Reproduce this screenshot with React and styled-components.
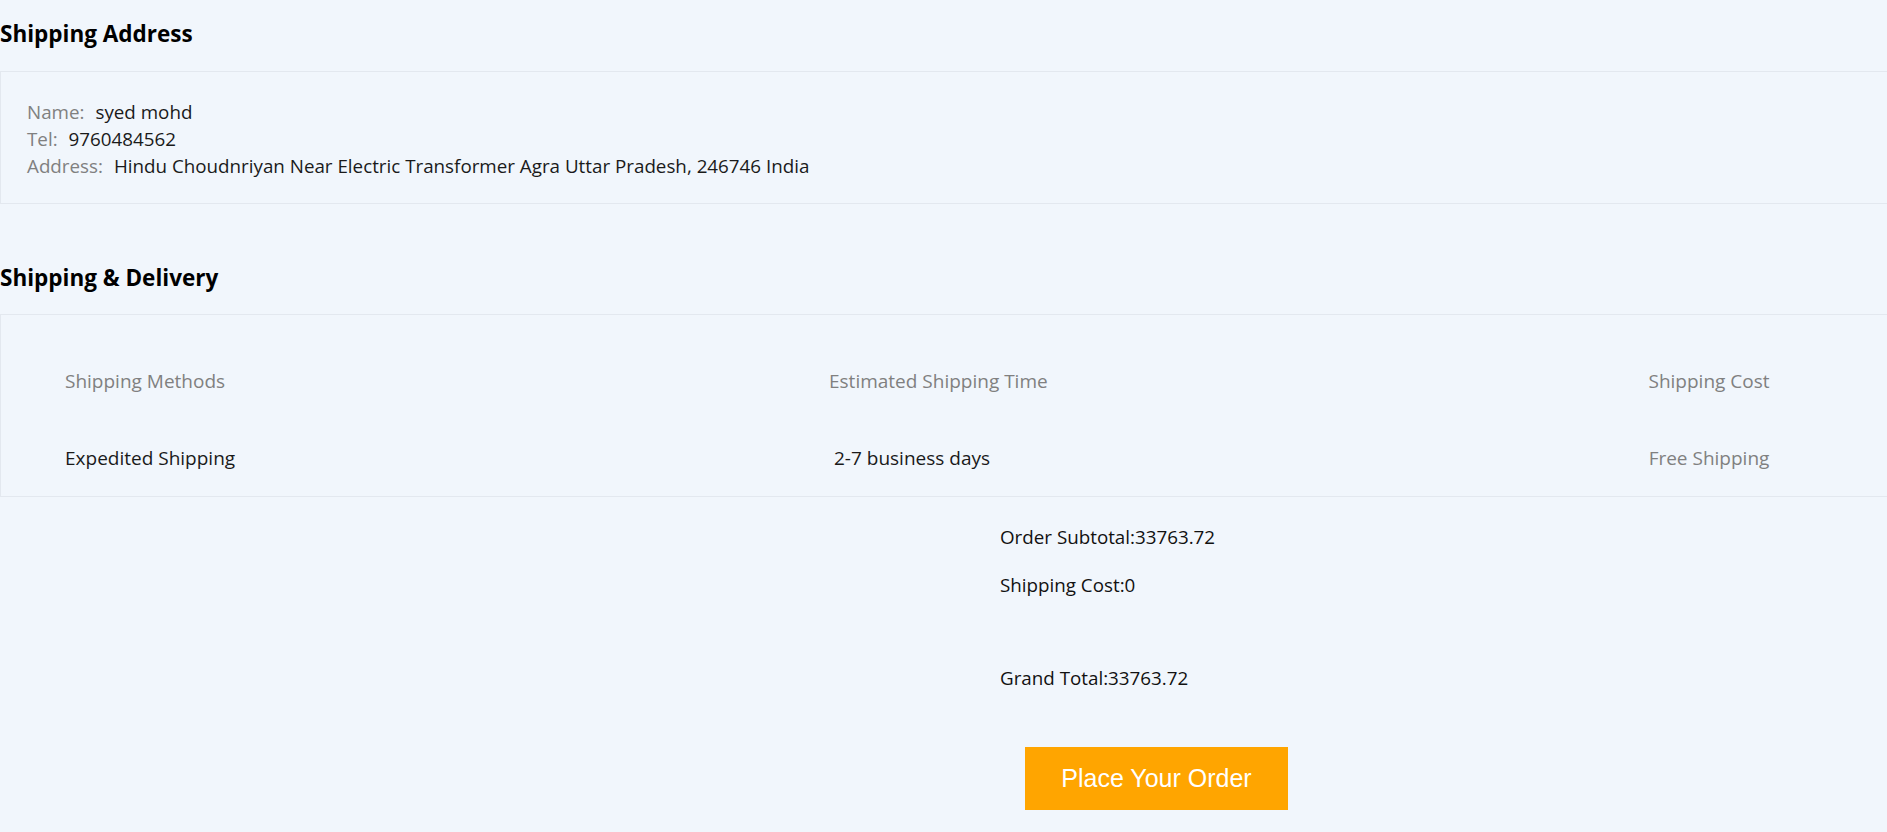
import styled, { createGlobalStyle } from 'styled-components';

const GlobalStyle = createGlobalStyle`
  html, body {
    margin: 0;
    padding: 0;
    background: #f1f6fc;
    font-family: "Open Sans", "Noto Sans", sans-serif;
    color: #1a1a1a;
  }
`;

const Page = styled.div`
  display: flex;
  flex-direction: column;
  padding-top: 20px;
`;

const SectionTitle = styled.h3`
  margin: 0;
  font-size: 22.5px;
  line-height: 27px;
  font-weight: 700;
  color: #000;
`;

const AddressCard = styled.div`
  margin: 24px 0 60px;
  padding: 27px 26px 23px;
  border: 1px solid #e3e8ef;
  border-right: none;
  display: flex;
  flex-direction: column;
`;

const InfoLine = styled.div`
  font-size: 18.8px;
  line-height: 27px;
  display: flex;
  gap: 11px;
`;

const Label = styled.span`
  color: #808080;
`;

const Value = styled.span`
  color: #1a1a1a;
`;

const DeliveryCard = styled.div`
  margin-top: 23px;
  padding: 52px 78px 24px 64px;
  border: 1px solid #e3e8ef;
  border-right: none;
  display: grid;
  grid-template-columns: 764px 1fr 200px;
  row-gap: 49px;
`;

const Cell = styled.div`
  font-size: 19px;
  line-height: 28px;
  white-space: nowrap;
  color: ${(p) => (p.muted ? '#808080' : '#1a1a1a')};
  text-align: ${(p) => (p.center ? 'center' : 'left')};
  padding-left: ${(p) => (p.indent ? '5px' : '0')};
`;

const Summary = styled.div`
  display: flex;
  flex-direction: column;
  align-items: flex-start;
  margin-left: 1000px;
  padding-top: 28px;
`;

const SummaryLine = styled.div`
  font-size: 18.8px;
  line-height: 24px;
  color: #111;
  margin-bottom: ${(p) => p.gap}px;
`;

const OrderButton = styled.button`
  margin: 57px 0 0 25px;
  width: 263px;
  height: 63px;
  border: none;
  background: #ffa500;
  color: #fff;
  font-family: "Liberation Sans", Arial, sans-serif;
  font-size: 25px;
  cursor: pointer;
`;

const rows = [
  { label: 'Name:', value: 'syed mohd' },
  { label: 'Tel:', value: '9760484562' },
  { label: 'Address:', value: 'Hindu Choudnriyan Near Electric Transformer Agra Uttar Pradesh, 246746 India' },
];

export default function App() {
  return (
    <>
      <GlobalStyle />
      <Page>
        <SectionTitle>Shipping Address</SectionTitle>
        <AddressCard>
          {rows.map((r) => (
            <InfoLine key={r.label}>
              <Label>{r.label}</Label>
              <Value>{r.value}</Value>
            </InfoLine>
          ))}
        </AddressCard>

        <SectionTitle>Shipping &amp; Delivery</SectionTitle>
        <DeliveryCard>
          <Cell muted>Shipping Methods</Cell>
          <Cell muted>Estimated Shipping Time</Cell>
          <Cell muted center>Shipping Cost</Cell>
          <Cell>Expedited Shipping</Cell>
          <Cell indent>2-7 business days</Cell>
          <Cell muted center>Free Shipping</Cell>
        </DeliveryCard>

        <Summary>
          <SummaryLine gap={24}>Order Subtotal:33763.72</SummaryLine>
          <SummaryLine gap={69}>Shipping Cost:0</SummaryLine>
          <SummaryLine gap={0}>Grand Total:33763.72</SummaryLine>
          <OrderButton>Place Your Order</OrderButton>
        </Summary>
      </Page>
    </>
  );
}
